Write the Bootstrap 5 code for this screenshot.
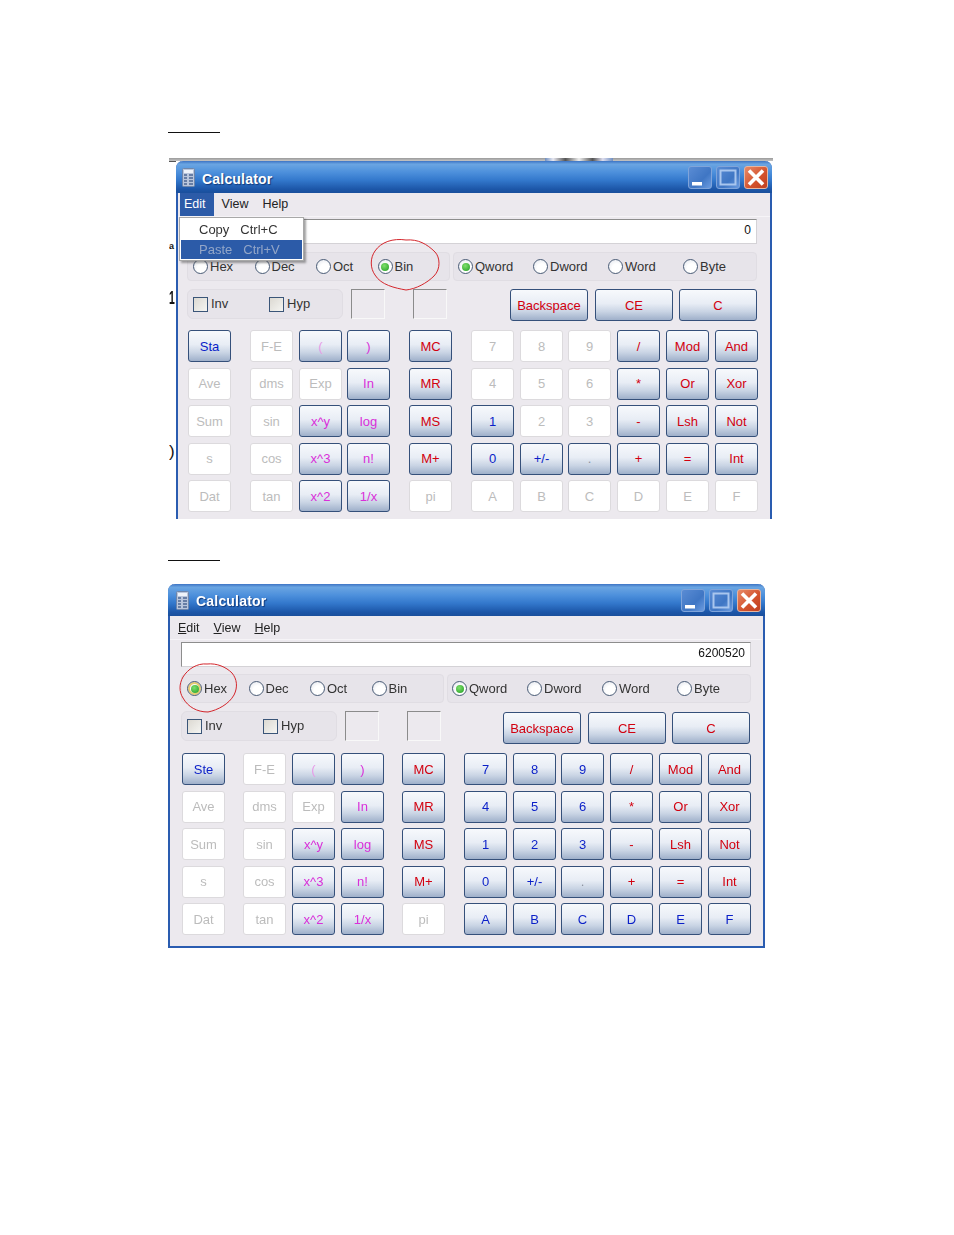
<!DOCTYPE html>
<html lang="en">
<head>
<meta charset="utf-8">
<title>Calculator</title>
<link href="https://cdn.jsdelivr.net/npm/bootstrap@5.3.0/dist/css/bootstrap.min.css" rel="stylesheet">
<style>
body{background:#fff;margin:0;font-family:"Liberation Sans",Arial,sans-serif;font-size:13px;color:#333}
.sheet{position:relative;width:954px;height:1235px;padding:132px 0 0 168px;overflow:hidden}
.rule-a{width:52px;height:1px;background:#111}
.rule-b{width:52px;height:1px;background:#111;margin:0 0 23px}
.shot-a{position:relative;width:604px;height:361px;margin:25px 0 41px 1px;overflow:hidden;padding:3px 0 0 7px}
.strip{position:absolute;left:0;top:0;width:604px;height:3px;background:linear-gradient(#9a9a9a,#c4c4c4)}
.scrap-blue{position:absolute;left:376px;top:0;width:68px;height:4px;background:linear-gradient(90deg,#6f8fc0,#e8e8f0 12%,#555 30%,#eee 50%,#555 70%,#dde 85%,#6f8fc0)}
.scrap-txt{position:absolute;left:0;font-weight:700;color:#111;line-height:1;transform-origin:left center}
.scrap-a{top:84px;font-size:9px}
.scrap-1{top:130px;font-size:19px;transform:scaleX(.55)}
.scrap-c{top:285px;font-size:17px;font-weight:400}
.scrap-edge{position:absolute;left:0;top:3px;width:7px;height:1px;background:#555}
.win{position:relative;background:#ece9ee;border:2px solid #2a5cb0;border-top:0;border-radius:7px 7px 0 0;filter:blur(.3px)}
.win-a{width:596px;height:358px;padding:0 13px 0 9px;border-bottom:0}
.win-b{width:597px;height:364px;padding:0 12px 0 11px}
.titlebar{height:32px;margin:0 -14px 0 -13px;border-radius:7px 7px 0 0;background:linear-gradient(#3d74c4 0,#6aa5e2 10%,#4d90dc 35%,#3378cc 60%,#1c56a8 88%,#1a4f9c 100%);padding:0 4px 0 8px}
.win-a .titlebar{margin:0 -15px 0 -11px;padding-left:6px}
.calc-ico{margin-right:7px;flex:none}
.ttl{color:#fff;font-weight:700;font-size:14px;letter-spacing:.2px;padding-top:3px;text-shadow:1px 1px 1px #123a7c}
.win-a .ttl{padding-top:5px}
.cap{width:24px;height:23px;border-radius:3px;border:1px solid #7fa4da;background:linear-gradient(135deg,#5a8cd4,#3f76c4 60%,#6c9ce0);position:relative}
.cap-x{background:linear-gradient(135deg,#e88a68,#d2512c 60%,#c04020);border-color:#e5b5a0;color:#fff}
.menubar{height:24px;margin:0 -11px;padding:0 0 0 8px;border-bottom:1px solid #f6f4f7;line-height:1}
.win-b .menubar{padding-top:2px}
.win-a .menubar{margin:0 -13px 0 -9px}
.menu-t{padding:0;color:#222;font-size:12.5px;margin-right:14px}
.menu-on{background:#2c5ba8;color:#fff;padding:5px 8px 4px 4px;height:23px;margin-left:-6px;margin-right:8px}
.screen{height:25px;margin-top:2px;background:#fff;border:1px solid #d4d2d6;border-top-color:#8d8d8d;border-left-color:#8d8d8d;text-align:right;padding:2px 5px 0 0;font-size:12px;line-height:16px;color:#111}
.grp{height:29px;background:#e7e4ea;border:1px solid #e0dde3;border-radius:4px;padding-left:5px}
.grp-base{width:263px}
.grp-size{width:304px;margin-left:3px;padding-left:4px}
.win-b .row-radio{margin-top:7px}
.row-radio,.row-opt{margin-top:8px}
.rd{display:flex;align-items:center;gap:2px;flex:none}
.rd-62{width:61.5px}
.rd-75{width:75px}
.dot{width:15px;height:15px;border-radius:50%;border:1px solid #4a5c76;background:radial-gradient(circle at 60% 65%,#fff 40%,#dfe2ea);display:block;flex:none;position:relative}
.dot-on::after{content:"";position:absolute;left:2.5px;top:2.5px;width:8px;height:8px;border-radius:50%;background:radial-gradient(circle at 40% 35%,#7fe06c,#1f9c22)}
.dot-hot{box-shadow:inset 0 0 0 2px #e8cc70}
.grp-opt{width:156px;height:30px;background:#e7e4ea;border:1px solid #e0dde3;border-radius:6px;padding-left:5px}
.chk{display:flex;align-items:center;gap:3px;flex:none}
.chk-76{width:76px}
.tick{width:15px;height:15px;border:1px solid #3a5578;background:linear-gradient(135deg,#dcd9d2,#f5f5f2);display:block}
.sunk{width:34px;height:30px;border:1px solid #f8f8f8;border-top-color:#8b8b8b;border-left-color:#8b8b8b;background:#ece9ee}
.sunk-1{margin-left:8px}
.sunk-2{margin-left:28px}
.win-b .key-top{margin-top:1px;margin-right:1px}
.btn.keycap{height:32px;width:43px;flex:none;padding:0;font-size:13px;line-height:1;border-radius:3px;border:1px solid #35507a;background:linear-gradient(#f7f9fc 0,#e8edf5 45%,#c9d4e4 72%,#9fb0ca 100%);color:#d2000f;margin-right:6px}
.btn.keycap-w{width:78px;margin-right:6px}
.btn.keycap-w:first-child{margin-right:7px}
.btn.keycap-w:last-child{margin-right:0}
.btn.keycap-off{background:#fff;border-color:#dcdadd;color:#bcbcbc}
.btn.t-blue{color:#0a1fc8}
.btn.t-mag{color:#d92fd9}
.btn.t-mag-pale{color:#e79ae7}
.btn.t-grey{color:#8d93a0}
.btn.k-sep{margin-right:18px}
.btn.k-sep-b{margin-right:19px}
.btn.k-end{margin-right:0}
.key-line>.btn.keycap:nth-child(7){margin-right:5px}
.win-a .btn.k-sep{margin-right:19px}
.win-a .key-line>.btn.keycap:nth-child(3){margin-right:5px}
.key-pad{padding:9px 0 0 1px}
.key-line{display:flex;margin-bottom:5.5px}
.ring{position:absolute;fill:none;stroke:#d4262c;stroke-width:1;pointer-events:none}
.ring-a{left:191px;top:75px}
.ring-b{left:9px;top:78px}
.dropmenu{position:absolute;left:1px;top:56px;width:125px;height:44px;background:#fff;border:1px solid #a8a8a8;box-shadow:2px 2px 2px rgba(70,70,70,.5);padding:1px;z-index:3}
.drop-row{height:21px;padding:0 0 0 18px;display:flex;gap:11px;align-items:center;color:#333}
.drop-on{height:19px;background:#2c5ba8;color:#93a6c8}
</style>
</head>
<body>
<div class="sheet">
  <div class="rule-a"></div>

  <div class="shot-a">
    <div class="strip"></div><div class="scrap-edge"></div><div class="scrap-blue"></div>
    <div class="scrap-txt scrap-a">a</div>
    <div class="scrap-txt scrap-1">1</div>
    <div class="scrap-txt scrap-c">)</div>
    <div class="win win-a">
      <div class="titlebar d-flex align-items-center">
        <svg width="13" height="19" viewBox="0 0 13 19" class="calc-ico"><rect x=".5" y=".5" width="12" height="18" rx="1" fill="#b9c6dc" stroke="#6f86aa"/><rect x="2" y="2" width="9" height="3" fill="#eef3fa"/><path d="M2 7h3M7 7h4M2 10h3M7 10h4M2 13h3M7 13h4M2 16h3M7 16h4" stroke="#4c6793" stroke-width="1.4"/></svg>
        <span class="ttl">Calculator</span>
        <div class="ms-auto d-flex gap-1">
          <div class="cap"><svg width="22" height="21" viewBox="0 0 22 21"><rect x="3" y="15" width="10" height="3.5" fill="#fff"/></svg></div>
          <div class="cap"><svg width="22" height="21" viewBox="0 0 22 21"><rect x="3.5" y="3.5" width="15" height="14" fill="none" stroke="#a9c6ee" stroke-width="2"/></svg></div>
          <div class="cap cap-x"><svg width="22" height="21" viewBox="0 0 22 21"><path d="M4 3.5L18 17.5M18 3.5L4 17.5" stroke="#fff" stroke-width="3.6"/></svg></div>
        </div>
      </div>
      <div class="menubar d-flex align-items-center">
        <span class="menu-t menu-on">Edit</span>
        <span class="menu-t">View</span>
        <span class="menu-t">Help</span>
      </div>
      <div class="screen">0</div>
      <div class="d-flex row-radio">
        <div class="grp grp-base d-flex align-items-center">
          <label class="rd rd-62"><span class="dot"></span>Hex</label>
          <label class="rd rd-62"><span class="dot"></span>Dec</label>
          <label class="rd rd-62"><span class="dot"></span>Oct</label>
          <label class="rd rd-62"><span class="dot dot-on"></span>Bin</label>
        </div>
        <div class="grp grp-size d-flex align-items-center">
          <label class="rd rd-75"><span class="dot dot-on"></span>Qword</label>
          <label class="rd rd-75"><span class="dot"></span>Dword</label>
          <label class="rd rd-75"><span class="dot"></span>Word</label>
          <label class="rd rd-75"><span class="dot"></span>Byte</label>
        </div>
      </div>
      <div class="d-flex row-opt">
        <div class="grp-opt d-flex align-items-center">
          <label class="chk chk-76"><span class="tick"></span>Inv</label>
          <label class="chk"><span class="tick"></span>Hyp</label>
        </div>
        <div class="sunk sunk-1"></div><div class="sunk sunk-2"></div>
        <div class="ms-auto d-flex key-top">
          <button class="btn keycap keycap-w">Backspace</button><button class="btn keycap keycap-w">CE</button><button class="btn keycap keycap-w">C</button>
        </div>
      </div>
      <div class="key-pad">
        <div class="key-line"><button class="btn keycap t-blue k-sep">Sta</button><button class="btn keycap keycap-off">F-E</button><button class="btn keycap t-mag-pale">(</button><button class="btn keycap t-mag k-sep">)</button><button class="btn keycap k-sep-b">MC</button><button class="btn keycap keycap-off">7</button><button class="btn keycap keycap-off">8</button><button class="btn keycap keycap-off">9</button><button class="btn keycap">/</button><button class="btn keycap">Mod</button><button class="btn keycap k-end">And</button></div>
        <div class="key-line"><button class="btn keycap keycap-off k-sep">Ave</button><button class="btn keycap keycap-off">dms</button><button class="btn keycap keycap-off">Exp</button><button class="btn keycap t-mag k-sep">In</button><button class="btn keycap k-sep-b">MR</button><button class="btn keycap keycap-off">4</button><button class="btn keycap keycap-off">5</button><button class="btn keycap keycap-off">6</button><button class="btn keycap">*</button><button class="btn keycap">Or</button><button class="btn keycap k-end">Xor</button></div>
        <div class="key-line"><button class="btn keycap keycap-off k-sep">Sum</button><button class="btn keycap keycap-off">sin</button><button class="btn keycap t-mag">x^y</button><button class="btn keycap t-mag k-sep">log</button><button class="btn keycap k-sep-b">MS</button><button class="btn keycap t-blue">1</button><button class="btn keycap keycap-off">2</button><button class="btn keycap keycap-off">3</button><button class="btn keycap">-</button><button class="btn keycap">Lsh</button><button class="btn keycap k-end">Not</button></div>
        <div class="key-line"><button class="btn keycap keycap-off k-sep">s</button><button class="btn keycap keycap-off">cos</button><button class="btn keycap t-mag">x^3</button><button class="btn keycap t-mag k-sep">n!</button><button class="btn keycap k-sep-b">M+</button><button class="btn keycap t-blue">0</button><button class="btn keycap t-blue">+/-</button><button class="btn keycap t-grey">.</button><button class="btn keycap">+</button><button class="btn keycap">=</button><button class="btn keycap k-end">Int</button></div>
        <div class="key-line"><button class="btn keycap keycap-off k-sep">Dat</button><button class="btn keycap keycap-off">tan</button><button class="btn keycap t-mag">x^2</button><button class="btn keycap t-mag k-sep">1/x</button><button class="btn keycap keycap-off k-sep-b">pi</button><button class="btn keycap keycap-off">A</button><button class="btn keycap keycap-off">B</button><button class="btn keycap keycap-off">C</button><button class="btn keycap keycap-off">D</button><button class="btn keycap keycap-off">E</button><button class="btn keycap keycap-off k-end">F</button></div>
      </div>
      <div class="dropmenu">
        <div class="drop-row"><span>Copy</span><span>Ctrl+C</span></div>
        <div class="drop-row drop-on"><span>Paste</span><span>Ctrl+V</span></div>
      </div>
      <svg class="ring ring-a" width="74" height="56" viewBox="0 0 74 56"><path d="M37 4C24 2 12 6 6 15C1 22 1 32 6 39C12 49 26 52 37 54C47 53 58 47 65 40C72 33 71 21 66 16C58 8 49 3 37 4Z"/></svg>
    </div>
  </div>

  <div class="rule-b"></div>

  <div class="win win-b">
    <div class="titlebar d-flex align-items-center">
      <svg width="13" height="19" viewBox="0 0 13 19" class="calc-ico"><rect x=".5" y=".5" width="12" height="18" rx="1" fill="#b9c6dc" stroke="#6f86aa"/><rect x="2" y="2" width="9" height="3" fill="#eef3fa"/><path d="M2 7h3M7 7h4M2 10h3M7 10h4M2 13h3M7 13h4M2 16h3M7 16h4" stroke="#4c6793" stroke-width="1.4"/></svg>
      <span class="ttl">Calculator</span>
      <div class="ms-auto d-flex gap-1">
        <div class="cap"><svg width="22" height="21" viewBox="0 0 22 21"><rect x="3" y="15" width="10" height="3.5" fill="#fff"/></svg></div>
        <div class="cap"><svg width="22" height="21" viewBox="0 0 22 21"><rect x="3.5" y="3.5" width="15" height="14" fill="none" stroke="#a9c6ee" stroke-width="2"/></svg></div>
        <div class="cap cap-x"><svg width="22" height="21" viewBox="0 0 22 21"><path d="M4 3.5L18 17.5M18 3.5L4 17.5" stroke="#fff" stroke-width="3.6"/></svg></div>
      </div>
    </div>
    <div class="menubar d-flex align-items-center">
      <span class="menu-t"><u>E</u>dit</span>
      <span class="menu-t"><u>V</u>iew</span>
      <span class="menu-t"><u>H</u>elp</span>
    </div>
    <div class="screen">6200520</div>
    <div class="d-flex row-radio">
      <div class="grp grp-base d-flex align-items-center">
        <label class="rd rd-62"><span class="dot dot-on dot-hot"></span>Hex</label>
        <label class="rd rd-62"><span class="dot"></span>Dec</label>
        <label class="rd rd-62"><span class="dot"></span>Oct</label>
        <label class="rd rd-62"><span class="dot"></span>Bin</label>
      </div>
      <div class="grp grp-size d-flex align-items-center">
        <label class="rd rd-75"><span class="dot dot-on"></span>Qword</label>
        <label class="rd rd-75"><span class="dot"></span>Dword</label>
        <label class="rd rd-75"><span class="dot"></span>Word</label>
        <label class="rd rd-75"><span class="dot"></span>Byte</label>
      </div>
    </div>
    <div class="d-flex row-opt">
      <div class="grp-opt d-flex align-items-center">
        <label class="chk chk-76"><span class="tick"></span>Inv</label>
        <label class="chk"><span class="tick"></span>Hyp</label>
      </div>
      <div class="sunk sunk-1"></div><div class="sunk sunk-2"></div>
      <div class="ms-auto d-flex key-top">
        <button class="btn keycap keycap-w">Backspace</button><button class="btn keycap keycap-w">CE</button><button class="btn keycap keycap-w">C</button>
      </div>
    </div>
    <div class="key-pad">
      <div class="key-line"><button class="btn keycap t-blue k-sep">Ste</button><button class="btn keycap keycap-off">F-E</button><button class="btn keycap t-mag-pale">(</button><button class="btn keycap t-mag k-sep">)</button><button class="btn keycap k-sep-b">MC</button><button class="btn keycap t-blue">7</button><button class="btn keycap t-blue">8</button><button class="btn keycap t-blue">9</button><button class="btn keycap">/</button><button class="btn keycap">Mod</button><button class="btn keycap k-end">And</button></div>
      <div class="key-line"><button class="btn keycap keycap-off k-sep">Ave</button><button class="btn keycap keycap-off">dms</button><button class="btn keycap keycap-off">Exp</button><button class="btn keycap t-mag k-sep">In</button><button class="btn keycap k-sep-b">MR</button><button class="btn keycap t-blue">4</button><button class="btn keycap t-blue">5</button><button class="btn keycap t-blue">6</button><button class="btn keycap">*</button><button class="btn keycap">Or</button><button class="btn keycap k-end">Xor</button></div>
      <div class="key-line"><button class="btn keycap keycap-off k-sep">Sum</button><button class="btn keycap keycap-off">sin</button><button class="btn keycap t-mag">x^y</button><button class="btn keycap t-mag k-sep">log</button><button class="btn keycap k-sep-b">MS</button><button class="btn keycap t-blue">1</button><button class="btn keycap t-blue">2</button><button class="btn keycap t-blue">3</button><button class="btn keycap">-</button><button class="btn keycap">Lsh</button><button class="btn keycap k-end">Not</button></div>
      <div class="key-line"><button class="btn keycap keycap-off k-sep">s</button><button class="btn keycap keycap-off">cos</button><button class="btn keycap t-mag">x^3</button><button class="btn keycap t-mag k-sep">n!</button><button class="btn keycap k-sep-b">M+</button><button class="btn keycap t-blue">0</button><button class="btn keycap t-blue">+/-</button><button class="btn keycap t-grey">.</button><button class="btn keycap">+</button><button class="btn keycap">=</button><button class="btn keycap k-end">Int</button></div>
      <div class="key-line"><button class="btn keycap keycap-off k-sep">Dat</button><button class="btn keycap keycap-off">tan</button><button class="btn keycap t-mag">x^2</button><button class="btn keycap t-mag k-sep">1/x</button><button class="btn keycap keycap-off k-sep-b">pi</button><button class="btn keycap t-blue">A</button><button class="btn keycap t-blue">B</button><button class="btn keycap t-blue">C</button><button class="btn keycap t-blue">D</button><button class="btn keycap t-blue">E</button><button class="btn keycap t-blue k-end">F</button></div>
    </div>
    <svg class="ring ring-b" width="60" height="52" viewBox="0 0 60 52"><path d="M28 2C18 1 9 7 4 15C0 22 0 30 4 36C9 45 18 50 29 50C39 48 50 42 55 33C59 25 58 17 53 11C47 5 38 1 28 2Z"/></svg>
  </div>
</div>
<script src="https://cdn.jsdelivr.net/npm/bootstrap@5.3.0/dist/js/bootstrap.bundle.min.js"></script>
</body>
</html>
